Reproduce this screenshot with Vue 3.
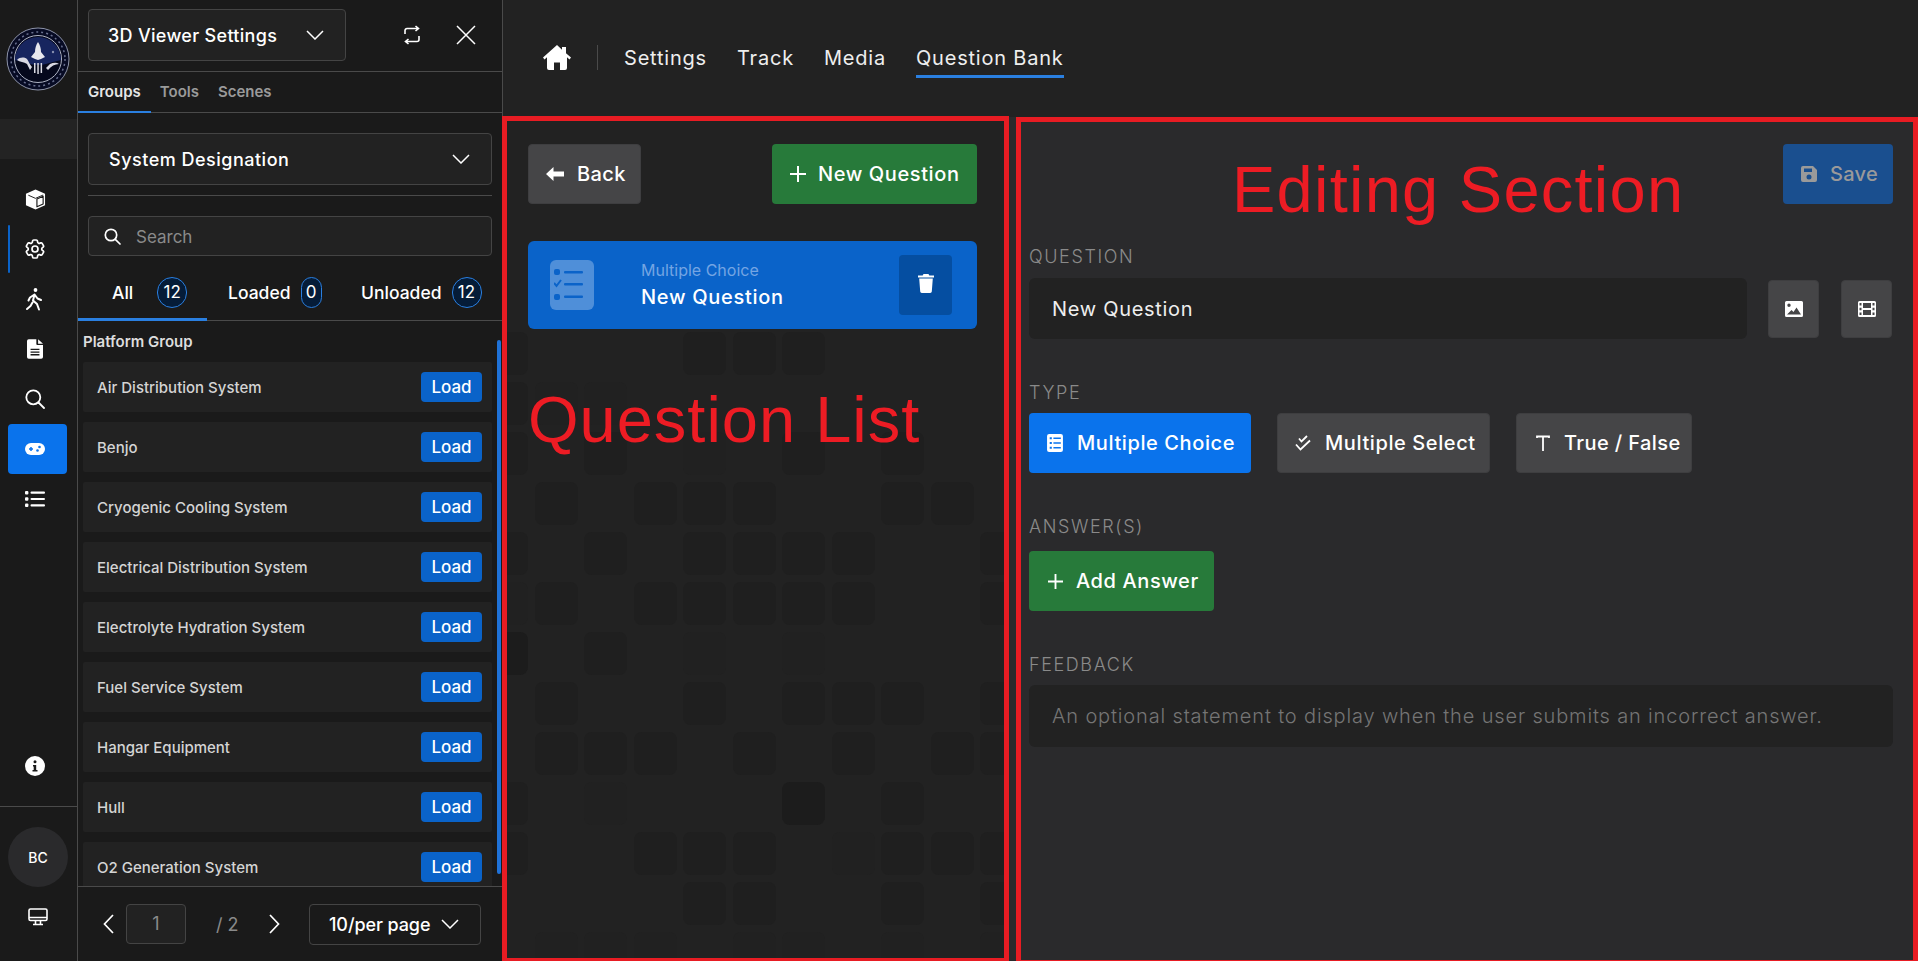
<script setup>
const systems = [
  'Air Distribution System',
  'Benjo',
  'Cryogenic Cooling System',
  'Electrical Distribution System',
  'Electrolyte Hydration System',
  'Fuel Service System',
  'Hangar Equipment',
  'Hull',
  'O2 Generation System',
];

const links = ['Settings', 'Track', 'Media', 'Question Bank'];

// faded squares behind the question list: one string per row, 0 = none, 1 = faint, 2 = normal, 3 = dark
const patternRows = [
  '20002220000',
  '21100000000',
  '20201020200',
  '02022200220',
  '20202222002',
  '12022222002',
  '30201010000',
  '02002022202',
  '02220202022',
  '20100030200',
  '20022201222',
  '00002200202',
  '01110110101',
];
const shades = { 1: '#212121', 2: '#1f1f1f', 3: '#1c1c1c' };
</script>

<template>
  <div class="app">
    <aside class="rail">
      <div class="logo">
        <svg width="64" height="64" viewBox="0 0 64 64">
          <circle cx="32" cy="32" r="31" fill="#070b24" stroke="#8d93a8" stroke-width="1" />
          <circle cx="32" cy="32" r="27" fill="none" stroke="#6a7190" stroke-width="1.500" stroke-dasharray="2 3" />
          <circle cx="32" cy="32" r="23.500" fill="#05081c" stroke="#aeb3c4" stroke-width="1" />
          <path d="M9 33a23 23 0 0 1 46 0l-8 2c-5 1-9 3-15 3s-10-2-15-3z" fill="#17255f" />
          <path d="M32 15c2 3 3 6 3 10l4 5-4 2-3 1-3-1-4-2 4-5c0-4 1-7 3-10z" fill="#e8e8ee" />
          <path d="M11 33c3-3 7-3 10-1 2 3 3 6 5 8l-2 3-3-6c-3-2-7-2-10-4zM53 37c-4 0-8 2-11 6l-2-2 4-4c3-1 6-2 9 0z" fill="#d8d8e2" />
          <path d="M28 46h1.500V36H28zM31.300 47h1.500V36h-1.500zM34.600 46h1.500V36h-1.500z" fill="#d8d8e2" />
          <circle cx="47" cy="25" r="1.200" fill="#8890b0" />
        </svg>
      </div>
      <div class="rail-band"></div>

      <nav class="rail-nav">
        <a class="rail-btn">
          <svg width="21" height="21" viewBox="0 0 22 22">
            <path d="M11 .5l10 4.500v12L11 21.500 1 17V5z" fill="#fff" />
            <path d="M12.500 10.500l6.500-3v8.200l-6.500 3z" fill="#fff" stroke="#1a1a1a" stroke-width="1.200" stroke-linejoin="round" />
            <path d="M3.500 6.500L11 9.800l8-3.500" fill="none" stroke="#1a1a1a" stroke-width="1" />
          </svg>
        </a>
        <a class="rail-btn current">
          <svg width="24" height="24" viewBox="0 0 24 24" fill="none" stroke="#fff" stroke-width="1.700">
            <path d="M9.594 3.940c.09-.542.56-.94 1.110-.94h2.593c.55 0 1.020.398 1.110.94l.213 1.281c.063.374.313.686.645.870.074.040.147.083.22.127.325.196.72.257 1.075.124l1.217-.456a1.125 1.125 0 0 1 1.370.49l1.296 2.247a1.125 1.125 0 0 1-.26 1.431l-1.003.827c-.293.241-.438.613-.43.992a7.723 7.723 0 0 1 0 .255c-.008.378.137.75.43.991l1.004.827c.424.35.534.955.26 1.430l-1.298 2.247a1.125 1.125 0 0 1-1.369.491l-1.217-.456c-.355-.133-.75-.072-1.076.124a6.470 6.470 0 0 1-.22.128c-.331.183-.581.495-.644.869l-.213 1.281c-.09.543-.56.94-1.110.94h-2.594c-.55 0-1.019-.398-1.110-.94l-.213-1.281c-.062-.374-.312-.686-.644-.87a6.520 6.520 0 0 1-.22-.127c-.325-.196-.72-.257-1.076-.124l-1.217.456a1.125 1.125 0 0 1-1.369-.49l-1.297-2.247a1.125 1.125 0 0 1 .26-1.431l1.004-.827c.292-.24.437-.613.43-.991a6.932 6.932 0 0 1 0-.255c.007-.38-.138-.751-.43-.992l-1.004-.827a1.125 1.125 0 0 1-.26-1.430l1.297-2.247a1.125 1.125 0 0 1 1.370-.491l1.216.456c.356.133.751.072 1.076-.124.072-.044.146-.086.22-.128.332-.183.582-.495.644-.869l.214-1.280z" />
            <circle cx="12" cy="12" r="3" />
          </svg>
        </a>
        <a class="rail-btn">
          <svg width="20" height="24" viewBox="0 0 20 24" fill="none" stroke="#fff" stroke-width="2" stroke-linecap="round" stroke-linejoin="round">
            <circle cx="10.500" cy="3" r="1.900" fill="#fff" stroke="none" />
            <path d="M9.500 7.500L5 10.500l-1.500 3M9.500 7.500l-1.500 6 4 3.500 2 5.500M9.500 7.500l3 4 3.500 1.500M7.500 15.500L5.500 19l-3.500 3" />
          </svg>
        </a>
        <a class="rail-btn">
          <svg width="16" height="20" viewBox="0 0 18 22">
            <path d="M2 0h8.500v5.500c0 .6.4 1 1 1H18V20a2 2 0 0 1-2 2H2a2 2 0 0 1-2-2V2a2 2 0 0 1 2-2zM12.500 0L18 5h-5.500z" fill="#fff" />
            <path d="M4 11.500h10M4 14.500h10M4 17.500h10" stroke="#1a1a1a" stroke-width="1.500" />
          </svg>
        </a>
        <a class="rail-btn">
          <svg width="20" height="20" viewBox="0 0 20 20" fill="none" stroke="#fff" stroke-width="1.800" stroke-linecap="round">
            <circle cx="8.300" cy="8.300" r="7" />
            <path d="M13.500 13.500L19 19" />
          </svg>
        </a>
        <a class="rail-btn active">
          <svg width="20" height="12" viewBox="0 0 20 12">
            <rect width="20" height="12" rx="6" fill="#fff" />
            <path d="M4 6h4M6 4v4" stroke="#0a73ec" stroke-width="1.500" />
            <circle cx="14.500" cy="4" r="1.300" fill="#0a73ec" />
            <circle cx="12.500" cy="7.500" r="1.300" fill="#0a73ec" />
          </svg>
        </a>
        <a class="rail-btn">
          <svg width="20" height="16" viewBox="0 0 20 16" fill="#fff">
            <rect x="0" y="0" width="3.400" height="3.400" rx="1" />
            <rect x="0" y="6.300" width="3.400" height="3.400" rx="1" />
            <rect x="0" y="12.600" width="3.400" height="3.400" rx="1" />
            <rect x="5.500" y=".6" width="14.500" height="2.200" rx="1" />
            <rect x="5.500" y="6.900" width="14.500" height="2.200" rx="1" />
            <rect x="5.500" y="13.200" width="14.500" height="2.200" rx="1" />
          </svg>
        </a>
      </nav>

      <a class="rail-btn info">
        <svg width="20" height="20" viewBox="0 0 20 20">
          <circle cx="10" cy="10" r="10" fill="#fff" />
          <circle cx="10" cy="5.800" r="1.500" fill="#1a1a1a" />
          <path d="M8 9h3.200v5H12.500v1.500h-5V14h1.200v-3.500H8z" fill="#1a1a1a" />
        </svg>
      </a>
      <div class="rail-foot">
        <div class="avatar">BC</div>
        <svg class="monitor" width="20" height="18" viewBox="0 0 20 18" fill="none" stroke="#fff" stroke-width="1.600">
          <rect x="1" y="1" width="18" height="11.500" rx="1.500" />
          <path d="M1 9.500h18M7.500 13v3M12.500 13v3M5 16.500h10" />
        </svg>
      </div>
    </aside>

    <section class="panel">
      <header class="panel-head">
        <div class="select viewer-select">
          <span>3D Viewer Settings</span>
          <svg class="chevron" width="18" height="10" viewBox="0 0 18 10"><path d="M1 1l8 8 8-8" /></svg>
        </div>
        <svg class="head-swap" width="18" height="20" viewBox="0 0 18 20" fill="none" stroke="#fff" stroke-width="1.600">
          <path d="M2 9V5.500A2 2 0 0 1 4 3.500h11M12.500 1l3 2.500-3 2.500M16 11v3.500a2 2 0 0 1-2 2H3M5.500 14l-3 2.500 3 2.500" />
        </svg>
        <svg class="head-close" width="20" height="20" viewBox="0 0 20 20" fill="none" stroke="#fff" stroke-width="1.500">
          <path d="M1 1l18 18M19 1L1 19" />
        </svg>
      </header>

      <div class="tabs">
        <span class="tab on">Groups</span>
        <span class="tab">Tools</span>
        <span class="tab">Scenes</span>
      </div>

      <div class="filters">
        <div class="select system-select">
          <span>System Designation</span>
          <svg class="chevron" width="18" height="10" viewBox="0 0 18 10"><path d="M1 1l8 8 8-8" /></svg>
        </div>
        <div class="rule"></div>
        <div class="search">
          <svg width="17" height="17" viewBox="0 0 17 17" fill="none" stroke="#fff" stroke-width="1.700" stroke-linecap="round">
            <circle cx="7" cy="7" r="5.700" />
            <path d="M11.300 11.300L16 16" />
          </svg>
          <span>Search</span>
        </div>
      </div>

      <div class="counts">
        <div class="count count-all"><span>All</span><b>12</b></div>
        <div class="count count-loaded"><span>Loaded</span><b class="thin">0</b></div>
        <div class="count count-unloaded"><span>Unloaded</span><b>12</b></div>
      </div>

      <div class="groups">
        <div class="groups-title">Platform Group</div>
        <div v-for="name in systems" :key="name" class="group-row">
          <span>{{ name }}</span>
          <button class="load">Load</button>
        </div>
        <div class="scrollbar"></div>
      </div>

      <footer class="pager">
        <svg class="pager-arrow" width="11" height="20" viewBox="0 0 11 20"><path d="M10 1L1.500 10 10 19" /></svg>
        <div class="page-input">1</div>
        <span class="page-total">/ 2</span>
        <svg class="pager-arrow next" width="11" height="20" viewBox="0 0 11 20"><path d="M1 1l8.500 9L1 19" /></svg>
        <div class="select per-page">
          <span>10/per page</span>
          <svg class="chevron" width="18" height="10" viewBox="0 0 18 10"><path d="M1 1l8 8 8-8" /></svg>
        </div>
      </footer>
    </section>

    <main class="main">
      <div class="topbar">
        <svg class="home" width="28" height="25" viewBox="0 0 28 25" fill="#fff">
          <path d="M14 0L0 12.500l1.500 2L4 12.300V23a2 2 0 0 0 2 2h5v-7.500h6V25h5a2 2 0 0 0 2-2V12.300l2.500 2.200 1.500-2L23 8.300V2h-4v2.800z" />
        </svg>
        <span class="topbar-sep"></span>
        <a v-for="link in links" :key="link" class="toplink" :class="{ on: link === 'Question Bank' }">{{ link }}</a>
      </div>

      <div class="workspace">
        <section class="questions">
          <div class="pattern">
            <div v-for="(row, r) in patternRows" :key="r" class="pattern-row">
              <i
                v-for="(c, i) in row"
                :key="i"
                class="pattern-cell"
                :style="{ background: shades[c] || 'transparent' }"
              ></i>
            </div>
          </div>

          <div class="questions-bar">
            <button class="btn grey back">
              <svg width="18" height="14" viewBox="0 0 18 14" fill="#fff"><path d="M7.500 0v4.500H18v5H7.500V14L0 7z" /></svg>
              Back
            </button>
            <button class="btn green new-q">
              <svg width="16" height="16" viewBox="0 0 16 16" stroke="#fff" stroke-width="2"><path d="M8 0v16M0 8h16" /></svg>
              New Question
            </button>
          </div>

          <div class="q-card">
            <div class="q-icon">
              <svg width="36" height="36" viewBox="0 0 36 36" fill="#0a63c9">
                <rect x="0" y="2" width="6" height="6" rx="2" />
                <rect x="0" y="27" width="6" height="6" rx="2" />
                <path d="M0 16l2.500 3L7 13" fill="none" stroke="#0a63c9" stroke-width="2" />
                <rect x="10" y="4" width="19" height="2.500" rx="1" />
                <rect x="10" y="16" width="19" height="2.500" rx="1" />
                <rect x="10" y="28.500" width="19" height="2.500" rx="1" />
              </svg>
            </div>
            <div class="q-text">
              <small>Multiple Choice</small>
              <strong>New Question</strong>
            </div>
            <button class="q-delete">
              <svg width="16" height="19" viewBox="0 0 16 19" fill="#fff">
                <path d="M5.500 0h5l.8 1.500H16v2H0v-2h4.700z" />
                <path d="M1.200 4.500h13.600l-1 13a1.600 1.600 0 0 1-1.600 1.500H3.800a1.600 1.600 0 0 1-1.600-1.500z" />
              </svg>
            </button>
          </div>

          <div class="note note-list">Question List</div>
          <div class="frame frame-list"></div>
        </section>

        <section class="editor">
          <div class="editor-top">
            <button class="btn save">
              <svg width="16" height="16" viewBox="0 0 16 16" fill="#9a9a9a">
                <path d="M2 0h10l4 4v10a2 2 0 0 1-2 2H2a2 2 0 0 1-2-2V2a2 2 0 0 1 2-2zM3 2.500V6h8V2.500z M8 8.500a2.500 2.500 0 1 0 0 5 2.500 2.500 0 0 0 0-5z" fill-rule="evenodd" />
              </svg>
              Save
            </button>
          </div>

          <label class="field-label first">QUESTION</label>
          <div class="question-row">
            <div class="text-field">New Question</div>
            <button class="btn grey square">
              <svg width="18" height="16" viewBox="0 0 18 16" fill="#fff">
                <path fill-rule="evenodd" d="M1.500 0h15A1.500 1.500 0 0 1 18 1.500v13a1.500 1.500 0 0 1-1.500 1.500h-15A1.500 1.500 0 0 1 0 14.500v-13A1.500 1.500 0 0 1 1.500 0zM4 2.500a1.700 1.700 0 1 0 0 3.400 1.700 1.700 0 0 0 0-3.400zM2 13.500h14l-4.500-7-3 4.500-2-2z" />
              </svg>
            </button>
            <button class="btn grey square last">
              <svg width="18" height="16" viewBox="0 0 18 16" fill="#fff">
                <path fill-rule="evenodd" d="M1.500 0h15A1.500 1.500 0 0 1 18 1.500v13a1.500 1.500 0 0 1-1.500 1.500h-15A1.500 1.500 0 0 1 0 14.500v-13A1.500 1.500 0 0 1 1.500 0zM1.500 2v2.500h2V2zM1.500 6.700v2.600h2V6.700zM1.500 11.500V14h2v-2.500zM14.500 2v2.500h2V2zM14.500 6.700v2.600h2V6.700zM14.500 11.500V14h2v-2.500zM5 2v5h8V2zM5 9v5h8V9z" />
              </svg>
            </button>
          </div>

          <label class="field-label">TYPE</label>
          <div class="type-row">
            <button class="btn blue type-choice">
              <svg width="16" height="18" viewBox="0 0 15 17" fill="#fff">
                <path fill-rule="evenodd" d="M2 0h11a2 2 0 0 1 2 2v13a2 2 0 0 1-2 2H2a2 2 0 0 1-2-2V2a2 2 0 0 1 2-2zM2.500 3v2h2V3zM6 3.300v1.400h7V3.300zM2.500 7.500v2h2v-2zM6 7.800v1.400h7V7.800zM2.500 12v2h2v-2zM6 12.300v1.400h7v-1.400z" />
              </svg>
              Multiple Choice
            </button>
            <button class="btn grey type-select">
              <svg width="16" height="16" viewBox="0 0 16 16" fill="none" stroke="#fff" stroke-width="1.800">
                <path d="M4 3.500l2.500 3L12 1M1 9.500l4.500 5L15 5.500" />
              </svg>
              Multiple Select
            </button>
            <button class="btn grey type-bool">
              <svg width="14" height="16" viewBox="0 0 14 16" fill="none" stroke="#fff" stroke-width="1.800">
                <path d="M1 3V1.500h12V3M7 1.500V16" />
              </svg>
              True / False
            </button>
          </div>

          <label class="field-label answers">ANSWER(S)</label>
          <div>
            <button class="btn green add-answer">
              <svg width="15" height="15" viewBox="0 0 16 16" stroke="#fff" stroke-width="2"><path d="M8 0v16M0 8h16" /></svg>
              Add Answer
            </button>
          </div>

          <label class="field-label">FEEDBACK</label>
          <div class="text-field feedback">An optional statement to display when the user submits an incorrect answer.</div>

          <div class="note note-edit">Editing Section</div>
          <div class="frame frame-edit"></div>
        </section>
      </div>
    </main>
  </div>
</template>

<style>
body {
  background: #fff;
}
</style>

<style scoped>
.app {
  display: flex;
  height: 961px;
  width: 1918px;
  font-family: Inter, "Liberation Sans", sans-serif;
  color: #fff;
  background: #1a1a1a;
}

/* left rail */
.rail {
  width: 78px;
  flex: none;
  display: flex;
  flex-direction: column;
  border-right: 1px solid #4a4a4a;
  box-sizing: border-box;
}
.logo {
  height: 119px;
  padding: 27px 0 0 6px;
  box-sizing: border-box;
}
.rail-band {
  height: 40px;
  margin-bottom: 15px;
  background: #232323;
}
.rail-btn {
  position: relative;
  display: flex;
  align-items: center;
  justify-content: center;
  width: 59px;
  height: 50px;
  margin-left: 8px;
  padding-right: 5px;
  box-sizing: border-box;
  border-radius: 4px;
}
.rail-btn.active {
  background: #0a73ec;
}
.rail-btn.current::before {
  content: "";
  position: absolute;
  left: 0;
  top: 1px;
  bottom: 1px;
  width: 2px;
  border-radius: 2px;
  background: #0a63c9;
}
.rail-btn.info {
  margin-top: auto;
  margin-bottom: 15px;
}
.rail-foot {
  height: 155px;
  padding: 20px 0 0 8px;
  box-sizing: border-box;
  border-top: 1px solid #4a4a4a;
}
.avatar {
  width: 60px;
  height: 60px;
  border-radius: 50%;
  background: #2a2a2c;
  display: flex;
  align-items: center;
  justify-content: center;
  font-size: 14px;
  font-weight: 500;
}
.monitor {
  display: block;
  margin: 21px 0 0 20px;
}

/* settings panel */
.panel {
  width: 425px;
  flex: none;
  display: flex;
  flex-direction: column;
  border-right: 1px solid #4a4a4a;
  box-sizing: border-box;
  background: #1a1a1a;
}
.select {
  display: flex;
  align-items: center;
  justify-content: space-between;
  box-sizing: border-box;
  background: #222;
  border: 1px solid #444;
  border-radius: 4px;
  color: #fff;
  font-size: 18px;
  font-weight: 500;
  letter-spacing: 0.3px;
}
.chevron {
  fill: none;
  stroke: #fff;
  stroke-width: 1.500;
}
.panel-head {
  height: 72px;
  flex: none;
  box-sizing: border-box;
  display: flex;
  align-items: flex-start;
  padding: 9px 0 0 10px;
  border-bottom: 1px solid #4a4a4a;
}
.viewer-select {
  width: 258px;
  height: 52px;
  padding: 0 21px 0 19px;
}
.head-swap {
  margin: 16px 0 0 57px;
}
.head-close {
  margin: 16px 0 0 35px;
}
.tabs {
  height: 41px;
  flex: none;
  display: flex;
  box-sizing: border-box;
  border-bottom: 1px solid #4a4a4a;
}
.tab {
  position: relative;
  margin-right: 19px;
  line-height: 40px;
  font-size: 15px;
  font-weight: 600;
  color: #9a9a9a;
}
.tab.on {
  color: #e6e6e6;
  margin-left: 10px;
}
.tab.on::after {
  content: "";
  position: absolute;
  left: -10px;
  right: -10px;
  bottom: -1px;
  height: 2px;
  background: #2a7fe0;
}
.filters {
  padding: 20px 10px 0;
  height: 143px;
  flex: none;
  box-sizing: border-box;
}
.system-select {
  height: 52px;
  padding: 0 21px 0 20px;
  letter-spacing: 0.5px;
}
.rule {
  height: 1px;
  margin: 10px 0 20px;
  background: #4a4a4a;
}
.search {
  display: flex;
  align-items: center;
  gap: 15px;
  height: 40px;
  padding: 1px 15px 0;
  box-sizing: border-box;
  background: #222;
  border: 1px solid #444;
  border-radius: 4px;
  color: #8a8a8a;
  font-size: 17px;
}
.counts {
  height: 65px;
  flex: none;
  box-sizing: border-box;
  display: flex;
  border-bottom: 1px solid #4a4a4a;
  font-size: 17.500px;
  font-weight: 500;
}
.count {
  position: relative;
  display: flex;
  align-items: center;
  height: 64px;
  padding-top: 8px;
  box-sizing: border-box;
}
.count b {
  display: block;
  min-width: 30px;
  height: 31px;
  box-sizing: border-box;
  padding: 0 5px;
  line-height: 28px;
  text-align: center;
  font-size: 17px;
  font-weight: 400;
  color: #fff;
  background: #051c38;
  border: 1px solid #2a7fe0;
  border-radius: 16px;
}
.count b.thin {
  min-width: 21px;
  padding: 0;
}
.count-all {
  width: 129px;
  padding-left: 34px;
  gap: 24px;
}
.count-all::after {
  content: "";
  position: absolute;
  left: 0;
  right: 0;
  bottom: -1px;
  height: 3px;
  background: #2a7fe0;
}
.count-loaded {
  padding-left: 21px;
  gap: 10px;
  width: 153px;
}
.count-unloaded {
  padding-left: 1px;
  gap: 10px;
}
.groups {
  position: relative;
  flex: 1;
  min-height: 0;
  overflow: hidden;
  padding: 12px 10px 0 5px;
}
.groups-title {
  height: 18px;
  line-height: 18px;
  margin-bottom: 11px;
  font-size: 15px;
  font-weight: 600;
  color: #ddd;
}
.group-row {
  display: flex;
  align-items: center;
  justify-content: space-between;
  height: 50px;
  margin-bottom: 10px;
  padding: 0 10px 0 14px;
  background: #222;
  border-radius: 2px;
  font-size: 15px;
  font-weight: 500;
  color: #d4d4d4;
}
.load {
  width: 61px;
  height: 30px;
  border: 0;
  border-radius: 4px;
  background: #0a63c9;
  color: #fff;
  font-family: inherit;
  font-size: 17px;
  font-weight: 500;
}
.scrollbar {
  position: absolute;
  right: 1px;
  top: 19px;
  width: 4px;
  height: 534px;
  border-radius: 2px;
  background: #1f72d8;
}
.pager {
  height: 75px;
  flex: none;
  box-sizing: border-box;
  display: flex;
  align-items: center;
  border-top: 1px solid #4a4a4a;
  padding-left: 25px;
}
.pager-arrow {
  fill: none;
  stroke: #fff;
  stroke-width: 1.700;
}
.page-input {
  width: 60px;
  height: 40px;
  margin-left: 12px;
  box-sizing: border-box;
  line-height: 38px;
  text-align: center;
  color: #8a8a8a;
  font-size: 18px;
  background: #222;
  border: 1px solid #444;
  border-radius: 4px;
}
.page-total {
  width: 21px;
  margin-left: 30px;
  white-space: nowrap;
  color: #8a8a8a;
  font-size: 18px;
}
.pager-arrow.next {
  margin-left: 32px;
}
.per-page {
  width: 172px;
  height: 41px;
  margin-left: 29px;
  padding: 0 21px 0 19px;
  background: #1a1a1a;
  letter-spacing: -0.1px;
}

/* main area */
.main {
  flex: 1;
  min-width: 0;
  display: flex;
  flex-direction: column;
  background: #222;
}
.topbar {
  height: 117px;
  flex: none;
  box-sizing: border-box;
  display: flex;
  align-items: center;
  padding: 0 0 2px 40px;
}
.topbar-sep {
  width: 1px;
  height: 25px;
  margin: 0 26px 0 26px;
  background: #4a4a4a;
}
.toplink {
  position: relative;
  margin-right: 30px;
  font-size: 20px;
  letter-spacing: 0.8px;
  color: #eee;
}
.toplink.on::after {
  content: "";
  position: absolute;
  left: 0;
  right: 0;
  bottom: -8px;
  height: 3px;
  background: #2a7fe0;
}
.workspace {
  flex: 1;
  min-height: 0;
  display: flex;
}
.questions {
  position: relative;
  width: 506px;
  flex: none;
  box-sizing: border-box;
  padding: 27px 32px 0 25px;
}
.questions-bar {
  position: relative;
  display: flex;
  justify-content: space-between;
  margin-bottom: 37px;
}
.btn {
  display: inline-flex;
  align-items: center;
  height: 60px;
  padding: 0 15px;
  gap: 13px;
  box-sizing: border-box;
  border: 0;
  border-radius: 4px;
  color: #fff;
  font-family: inherit;
  font-size: 20px;
  font-weight: 500;
  letter-spacing: 0.6px;
  white-space: nowrap;
}
.btn svg {
  flex: none;
}
.btn.grey {
  background: #454547;
  border: 1px solid #3e3e40;
}
.btn.green {
  background: #277a3a;
}
.btn.blue {
  background: #0a73ec;
}
.back {
  width: 113px;
  padding-left: 17px;
  letter-spacing: 0.4px;
}
.new-q {
  width: 205px;
  padding-left: 18px;
  gap: 12px;
}
.q-card {
  position: relative;
  display: flex;
  align-items: center;
  height: 88px;
  border-radius: 6px;
  background: #0a63c9;
}
.q-icon {
  width: 44px;
  height: 50px;
  margin-left: 22px;
  border-radius: 6px;
  background: #4f8fd9;
  display: flex;
  align-items: center;
  justify-content: center;
}
.q-text {
  display: flex;
  flex-direction: column;
  margin-left: 47px;
}
.q-text small {
  margin-top: -2px;
  font-size: 16px;
  color: #74a5e3;
}
.q-text strong {
  margin-top: 5px;
  font-size: 20px;
  font-weight: 500;
  letter-spacing: 0.7px;
}
.q-delete {
  width: 53px;
  height: 60px;
  margin-left: auto;
  margin-right: 25px;
  border: 0;
  border-radius: 4px;
  background: #054ea1;
}
.pattern {
  position: absolute;
  left: -18px;
  top: 215px;
  right: 0;
  bottom: 0;
  overflow: hidden;
  clip-path: inset(0 0 0 18px);
}
.pattern-row {
  display: flex;
  height: 43px;
  margin-bottom: 7px;
}
.pattern-cell {
  display: block;
  flex: none;
  width: 43px;
  height: 43px;
  margin-right: 6.500px;
  border-radius: 8px;
}
.editor {
  position: relative;
  flex: 1;
  min-width: 0;
  box-sizing: border-box;
  padding: 27px 25px 0 20px;
  background: #2a2a2c;
}
.editor-top {
  display: flex;
  justify-content: flex-end;
  height: 60px;
}
.save {
  width: 110px;
  padding-left: 18px;
  background: #1a4f8f;
  color: #9a9a9a;
  letter-spacing: 0.3px;
}
.field-label {
  display: block;
  height: 24px;
  line-height: 26px;
  margin-top: 41px;
  margin-bottom: 9px;
  font-size: 18px;
  font-weight: 300;
  letter-spacing: 1.600px;
  color: #8a8a8a;
}
.field-label.first {
  margin-top: 40px;
  margin-bottom: 10px;
}
.field-label.answers {
  margin-bottom: 13px;
}
.question-row {
  display: flex;
  align-items: center;
  padding-right: 1px;
}
.text-field {
  flex: 1;
  height: 61px;
  box-sizing: border-box;
  padding: 0 23px;
  display: flex;
  align-items: center;
  border-radius: 6px;
  background: #222;
  font-size: 20px;
  letter-spacing: 0.7px;
  color: #eee;
}
.text-field.feedback {
  flex: none;
  height: 62px;
  margin-top: 2px;
  font-weight: 300;
  letter-spacing: 0.85px;
  color: #757575;
}
.square {
  width: 51px;
  padding: 0;
  justify-content: center;
  margin-left: 21px;
  height: 58px;
}
.square.last {
  margin-left: 22px;
}
.type-row {
  display: flex;
  gap: 26px;
}
.type-choice {
  width: 222px;
  padding: 0 0 0 18px;
  gap: 14px;
}
.type-select {
  width: 213px;
  padding: 0 0 0 17px;
  gap: 14px;
}
.type-bool {
  width: 176px;
  padding: 0 0 0 19px;
  gap: 14px;
  letter-spacing: 0.4px;
}
.add-answer {
  width: 185px;
  padding-left: 19px;
}
.note {
  position: absolute;
  font-family: "Liberation Sans", sans-serif;
  font-size: 65px;
  line-height: 75px;
  letter-spacing: 1px;
  color: #ed1c24;
  white-space: nowrap;
}
.note-list {
  left: 25px;
  top: 265px;
}
.note-edit {
  left: 223px;
  top: 35px;
  letter-spacing: 1.250px;
}
.frame {
  position: absolute;
  border: 5px solid #e81c23;
  box-sizing: border-box;
  pointer-events: none;
}
.frame-list {
  left: -1px;
  top: -1px;
  right: 0;
  bottom: -2px;
}
.frame-edit {
  left: 7px;
  top: 0;
  right: 0;
  bottom: -4px;
}
</style>
